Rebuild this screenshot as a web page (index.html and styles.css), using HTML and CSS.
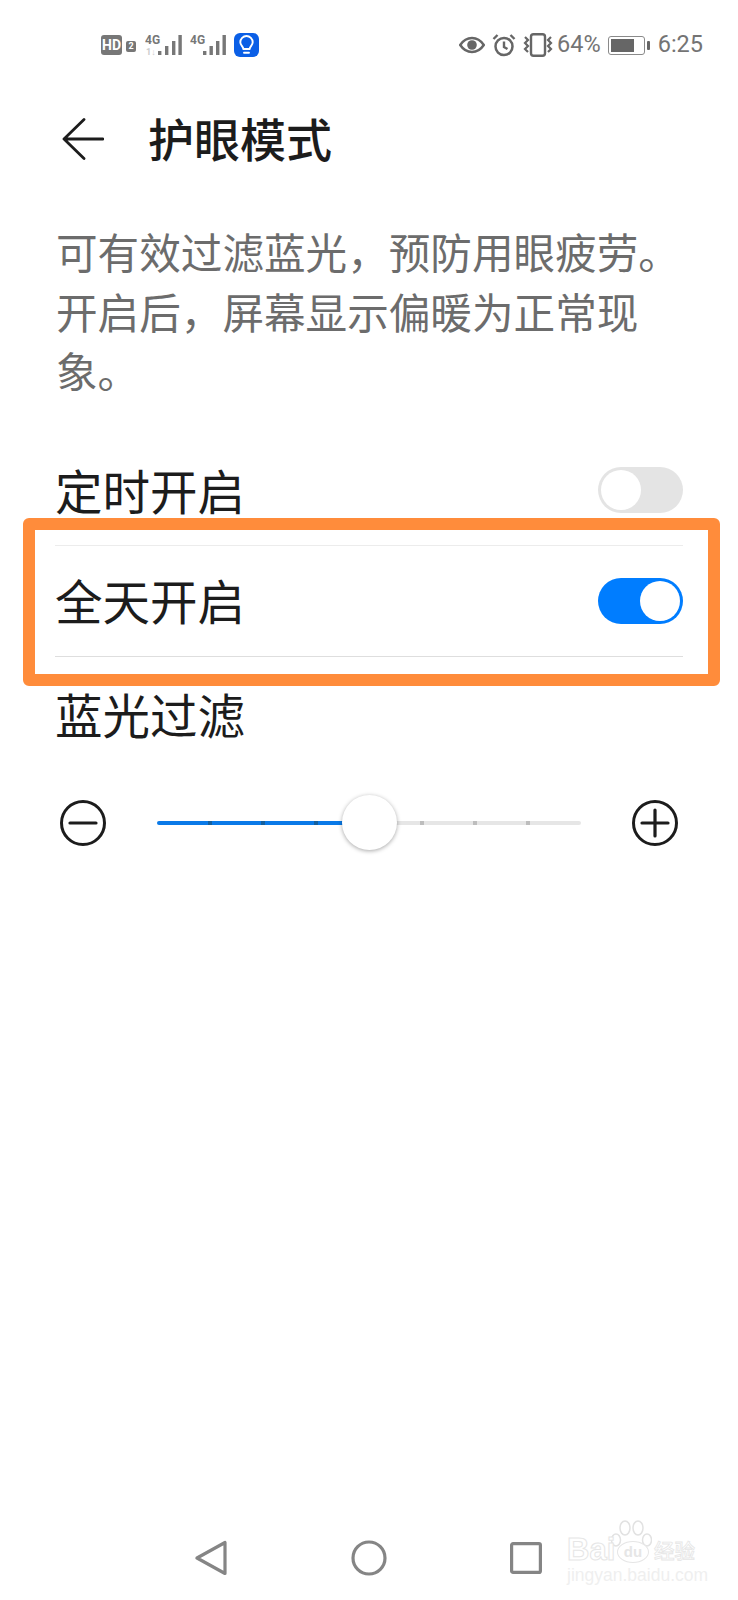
FILE: index.html
```html
<!DOCTYPE html>
<html lang="zh-CN">
<head>
<meta charset="utf-8">
<title>护眼模式</title>
<link rel="stylesheet" href="styles.css">
</head>
<body>
<div class="status">
  <div class="status-left">
    <span class="hd">HD</span><span class="sim">2</span>
    <svg class="sig" width="37" height="24" viewBox="0 0 37 24">
      <text x="0" y="10.500" class="g4">4G</text>
      <text x="1" y="22" class="g1">1↓</text>
      <g fill="#777"><rect x="13" y="18" width="3.400" height="4"/><rect x="20" y="13" width="3.400" height="9"/><rect x="27" y="8" width="3.400" height="14"/><rect x="33.400" y="2" width="3.400" height="20"/></g>
    </svg>
    <svg class="sig sig-second" width="37" height="24" viewBox="0 0 37 24">
      <text x="0" y="10.500" class="g4">4G</text>
      <g fill="#777"><rect x="13" y="18" width="3.400" height="4"/><rect x="19.500" y="13" width="3.400" height="9"/><rect x="26" y="8" width="3.400" height="14"/><rect x="32.500" y="2" width="3.400" height="20"/></g>
    </svg>
    <svg class="bulb" width="25" height="24" viewBox="0 0 25 24">
      <rect width="25" height="24" rx="6" fill="#0b5fe6"/>
      <path d="M9.300 16c0-2.400-3-3.500-3-6.800a6.200 6.200 0 0 1 12.400 0c0 3.300-3 4.400-3 6.800zM10 19.800h5" fill="none" stroke="#fff" stroke-width="1.900" stroke-linecap="round" stroke-linejoin="round"/>
    </svg>
  </div>
  <div class="status-right">
    <svg width="26" height="18" viewBox="0 0 26 18"><path d="M1.200 9c3-4.500 7-7 11.800-7s8.800 2.500 11.800 7c-3 4.500-7 7-11.800 7S4.200 13.500 1.200 9z" fill="none" stroke="#666" stroke-width="2.500"/><circle cx="13" cy="9" r="4.800" fill="#666"/></svg>
    <svg class="gap7" width="24" height="24" viewBox="0 0 24 24"><circle cx="12" cy="13.500" r="8.500" fill="none" stroke="#666" stroke-width="2.500"/><path d="M12 8.500v5.500l3.500 2M1.500 6l4-4M22.500 6l-4-4" fill="none" stroke="#666" stroke-width="2.400"/></svg>
    <svg class="gap7" width="30" height="24" viewBox="0 0 30 24"><rect x="8" y="1.200" width="14" height="21.600" rx="2.500" fill="none" stroke="#666" stroke-width="2.400"/><path d="M2 4l3 3-3 3 3 3-3 3 3 3M28 4l-3 3 3 3-3 3 3 3-3 3" fill="none" stroke="#666" stroke-width="2.200"/></svg>
    <span class="pct">64%</span>
    <span class="battery"><span class="battery-level"></span></span><span class="nub"></span>
    <span class="clock">6:25</span>
  </div>
</div>

<header class="head">
  <svg class="back" width="42" height="42" viewBox="0 0 42 42"><path d="M41 21H2M22 1.500 2 21l20 19.500" fill="none" stroke="#1c1c1c" stroke-width="2.800" stroke-linecap="round" stroke-linejoin="round"/></svg>
  <h1 class="title">护眼模式</h1>
</header>

<p class="desc">可有效过滤蓝光，预防用眼疲劳。<br>开启后，屏幕显示偏暖为正常现<br>象。</p>

<section class="rows">
  <div class="row row-first">
    <span class="label">定时开启</span>
    <span class="toggle"><span class="knob"></span></span>
  </div>
  <div class="row">
    <span class="label label-up">全天开启</span>
    <span class="toggle toggle-on"><span class="knob"></span></span>
  </div>
  <div class="row row-plain">
    <span class="label">蓝光过滤</span>
  </div>
</section>

<div class="slider">
  <svg width="46" height="46" viewBox="0 0 46 46"><circle cx="23" cy="23" r="21.500" fill="none" stroke="#1c1c1c" stroke-width="3"/><path d="M10 23h26" stroke="#1c1c1c" stroke-width="3.200" stroke-linecap="round"/></svg>
  <div class="track">
    <i class="tick tick-blue"></i><i class="tick tick-blue"></i><i class="tick tick-blue"></i>
    <span class="anchor"><span class="thumb"></span></span>
    <i class="tick"></i><i class="tick"></i><i class="tick"></i>
  </div>
  <svg width="46" height="46" viewBox="0 0 46 46"><circle cx="23" cy="23" r="21.500" fill="none" stroke="#1c1c1c" stroke-width="3"/><path d="M10 23h26M23 10v26" stroke="#1c1c1c" stroke-width="3.200" stroke-linecap="round"/></svg>
</div>

<nav class="nav">
  <svg width="32" height="36" viewBox="0 0 32 36"><path d="M30 2.500v31L2 18z" fill="none" stroke="#858585" stroke-width="3.200" stroke-linejoin="round"/></svg>
  <svg width="36" height="36" viewBox="0 0 36 36"><circle cx="18" cy="18" r="16" fill="none" stroke="#858585" stroke-width="3.200"/></svg>
  <svg width="32" height="32" viewBox="0 0 32 32"><rect x="1.600" y="1.600" width="28.800" height="28.800" rx="1.500" fill="none" stroke="#858585" stroke-width="3.200"/></svg>
</nav>

<div class="highlight"></div>

<div class="watermark">
  <svg class="paw" width="42" height="36" viewBox="0 0 42 36"><g fill="#fff" stroke="#e2e2e2" stroke-width="1.500"><ellipse cx="6" cy="20" rx="4.500" ry="6"/><ellipse cx="15" cy="8" rx="5" ry="7"/><ellipse cx="28" cy="8" rx="5" ry="7"/><ellipse cx="37" cy="20" rx="4.500" ry="6"/></g></svg>
  <div class="wm-main"><span class="wm-bai">Bai</span><span class="wm-du">du</span><span class="wm-cn">经验</span></div>
  <div class="wm-url">jingyan.baidu.com</div>
</div>
</body>
</html>
```

FILE: styles.css
```css
* { box-sizing: border-box; }
html, body { margin: 0; padding: 0; }
body {
  position: relative;
  width: 738px;
  height: 1600px;
  overflow: hidden;
  background: #fff;
  display: flex;
  flex-direction: column;
  font-family: "Noto Sans CJK SC", "Noto Sans", sans-serif;
  color: #1c1c1c;
}

/* status bar */
.status {
  height: 90px;
  padding: 0 35px 0 101px;
  display: flex;
  align-items: center;
  justify-content: space-between;
  flex: none;
}
.status-left, .status-right { display: flex; align-items: center; }
.hd {
  width: 21px; height: 20px;
  background: #777; color: #fff;
  border-radius: 3px;
  font: 700 14px/20px "Roboto", sans-serif;
  text-align: center;
}
.sim {
  width: 10px; height: 11px; margin: 3px 0 0 4px;
  background: #777; color: #fff;
  border-radius: 2px;
  font: 700 9px/11px "Roboto", sans-serif;
  text-align: center;
}
.sig { margin-left: 9px; }
.sig-second { margin-left: 8px; }
.bulb { margin-left: 7px; }
.g4 { font: 700 12px "Roboto", sans-serif; fill: #777; }
.g1 { font: 700 9px "Roboto", sans-serif; fill: #ccc; }
.gap7 { margin-left: 7px; }
.pct, .clock { font: 400 23.500px/1 "Roboto", sans-serif; color: #747474; }
.pct { margin-left: 4px; }
.battery {
  width: 37px; height: 19px; margin-left: 7px; padding: 2px;
  border: 1.500px solid #8a8a8a; border-radius: 3px;
}
.battery-level { display: block; width: 23px; height: 100%; background: #666; }
.nub { width: 3px; height: 9px; margin-left: 2px; background: #666; border-radius: 1px; }
.clock { margin-left: 8px; }

/* header */
.head {
  height: 100px;
  padding: 0 0 3px 62px;
  display: flex;
  align-items: center;
  gap: 44px;
  flex: none;
}
.back { flex: none; }
.title { margin: 0 0 4px; font-size: 46px; line-height: 1; font-weight: 500; letter-spacing: 0; }

/* description */
.desc {
  margin: 32px 0 0;
  padding-left: 56px;
  font-size: 41.600px;
  line-height: 59.500px;
  color: #6c6c6c;
  flex: none;
}

/* rows */
.rows { margin: 34px 55px 0 55px; flex: none; }
.row {
  height: 111px;
  display: flex;
  align-items: center;
  justify-content: space-between;
  border-bottom: 1px solid #dedede;
}
.row-first { border-bottom-color: #ececec; }
.row-plain { height: 120px; padding-bottom: 6px; border-bottom: 0; }
.label { font-size: 47.500px; line-height: 1; }
.label-up { margin-bottom: 2px; }
.toggle {
  width: 85px; height: 46px; padding: 3px;
  background: #e4e4e4;
  border-radius: 23px;
  display: flex;
  flex: none;
}
.knob { width: 40px; height: 40px; background: #fff; border-radius: 50%; }
.toggle-on { background: #007dff; justify-content: flex-end; }

/* slider */
.slider {
  height: 92px;
  padding-left: 60px;
  display: flex;
  align-items: center;
  gap: 51px;
  flex: none;
}
.slider svg { flex: none; }
.track {
  width: 424px; height: 4px;
  padding: 0 51px;
  border-radius: 2px;
  background: linear-gradient(to right, #0a7ae8 50%, #e6e6e6 50%);
  display: flex;
  justify-content: space-between;
}
.tick { width: 4px; height: 4px; background: #bdbdbd; }
.tick-blue { background: #14609f; }
.anchor { width: 4px; height: 4px; display: flex; justify-content: center; align-items: center; }
.thumb {
  flex: none;
  width: 55px; height: 55px;
  border-radius: 50%;
  background: #fff;
  box-shadow: 0 1px 4px rgba(0,0,0,.35);
}

/* nav bar */
.nav {
  margin-top: auto;
  height: 84px;
  padding-left: 195px;
  display: flex;
  align-items: center;
  gap: 123.500px;
  flex: none;
}

/* annotation over the screenshot */
.highlight {
  position: absolute;
  left: 23px; top: 518px;
  width: 697px; height: 168px;
  border: 12px solid #ff8c3b;
  border-radius: 6px;
}

/* watermark */
.watermark {
  position: absolute;
  left: 567px; top: 1520px;
  width: 134px; height: 64px;
  color: #fff;
  text-align: center;
}
.paw { position: absolute; left: 43px; top: 0; }
.wm-main {
  position: absolute; left: 0; top: 15px; width: 134px;
  display: flex; align-items: center; white-space: nowrap;
  font: 700 31px/30px "Liberation Sans", sans-serif;
  -webkit-text-stroke: 1px #e6e6e6;
}
.wm-bai { width: 49px; text-align: left; }
.wm-du {
  width: 32px; height: 22px;
  font-size: 15px; line-height: 19px;
  color: #e6e6e6;
  -webkit-text-stroke: 0;
  background: #fff;
  border: 1.500px solid #e6e6e6;
  border-radius: 50%;
  margin: 4px 5px 0 1px;
  position: relative;
}
.wm-cn { font: 500 20.500px/30px "Noto Sans CJK SC", sans-serif; -webkit-text-stroke: .8px #e6e6e6; }
.wm-url {
  position: absolute; left: 0; top: 47px; width: 134px;
  font: 400 17.500px/17px "Liberation Sans", sans-serif;
  color: #efefef;
  white-space: nowrap;
}
```
